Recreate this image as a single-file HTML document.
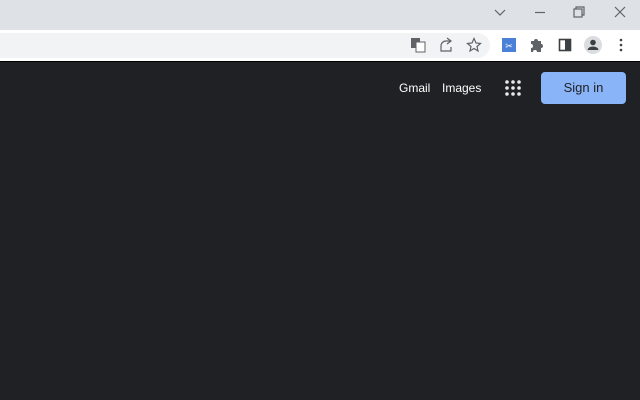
<!DOCTYPE html><html><head><style>
body{margin:0;width:640px;height:400px;overflow:hidden;background:#202124;font-family:"Liberation Sans",Arial,sans-serif;position:relative}
.a{position:absolute}
</style></head><body>
<div class="a" style="left:0;top:0;width:640px;height:30px;background:#dee1e6"></div>
<div class="a" style="left:0;top:30px;width:640px;height:31px;background:#fff"></div>
<div class="a" style="left:-20px;top:33px;width:510px;height:25px;background:#f1f3f4;border-radius:13px"></div>
<div class="a" style="left:0;top:61px;width:640px;height:1px;background:#000"></div>
<svg class="a" style="left:0;top:0" width="640" height="62">
<g stroke="#5f6368" stroke-width="1.2" fill="none">
<path d="M495 10l5 5 5-5"/>
<path d="M535 12.5h10"/>
<rect x="574" y="9" width="8" height="8"/><path d="M576 9V7h8v8h-2"/>
<path d="M615 7l10 10M625 7l-10 10"/>
<path d="M441 50v-4a5 5 0 0 1 5-5h4M447 38l4 3-4 3M441 46v5h10v-4"/>
<path d="M474 38.5l2 4.5 4.5.5-3.5 3 1 4.5-4-2.5-4 2.5 1-4.5-3.5-3 4.5-.5z"/>
</g>
<rect x="411" y="38" width="9" height="10" fill="#5f6368"/><rect x="416" y="42" width="9" height="10" fill="#fff" stroke="#5f6368"/>
<rect x="502" y="38" width="14" height="14" fill="#4a80d8"/><text x="509" y="49" font-size="9" fill="#fff" text-anchor="middle">✂</text>
<path d="M531 41h3a2 2 0 0 1 4 0h3v3a2 2 0 0 1 0 4v4h-4a2 2 0 0 0-4 0h-2v-4a2 2 0 0 0 0-4z" fill="#5f6368"/>
<rect x="559.5" y="39.5" width="11" height="11" fill="none" stroke="#3c4043" stroke-width="1.6"/><rect x="565" y="39.5" width="5.5" height="11" fill="#3c4043"/>
<circle cx="593" cy="45" r="9" fill="#dadce0"/><circle cx="593" cy="42.5" r="2.8" fill="#3c4043"/><path d="M587.5 50a5.5 3.5 0 0 1 11 0z" fill="#3c4043"/>
<g fill="#3c4043"><circle cx="621" cy="40" r="1.3"/><circle cx="621" cy="45" r="1.3"/><circle cx="621" cy="50" r="1.3"/></g>
</svg>
<div class="a" style="left:399px;top:81px;font-size:12px;color:#fff">Gmail</div>
<div class="a" style="left:442px;top:81px;font-size:12px;color:#fff">Images</div>
<svg class="a" style="left:505px;top:80px" width="17" height="17"><g fill="#e8eaed">
<circle cx="2" cy="2" r="1.8"/><circle cx="8" cy="2" r="1.8"/><circle cx="14" cy="2" r="1.8"/>
<circle cx="2" cy="8" r="1.8"/><circle cx="8" cy="8" r="1.8"/><circle cx="14" cy="8" r="1.8"/>
<circle cx="2" cy="14" r="1.8"/><circle cx="8" cy="14" r="1.8"/><circle cx="14" cy="14" r="1.8"/></g></svg>
<div class="a" style="left:541px;top:72px;width:83px;height:30px;border:1px solid #8ab4f8;background:#8ab4f8;border-radius:4px;color:#202124;font-size:13px;text-align:center;line-height:30px">Sign in</div>
</body></html>
